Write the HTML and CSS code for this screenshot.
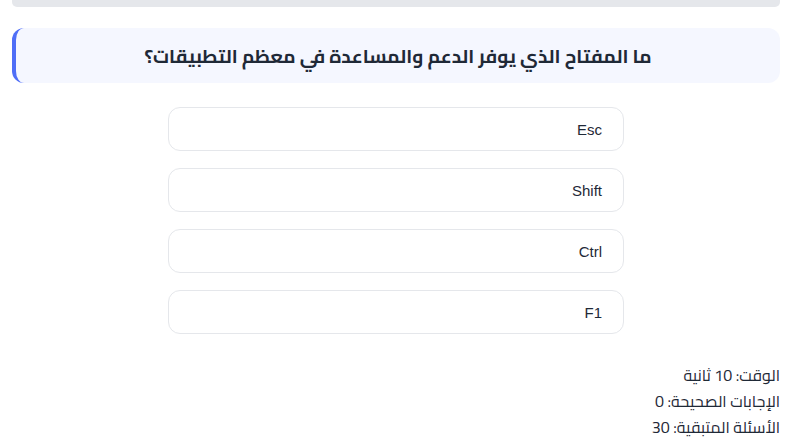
FILE: index.html
```html
<!DOCTYPE html>
<html lang="ar" dir="rtl">
<head>
<meta charset="utf-8">
<link rel="stylesheet" href="styles.css">
</head>
<body>
<div class="page">
  <div class="progress"><div class="progress-fill" style="width:0%"></div></div>
  <div class="question">ما المفتاح الذي يوفر الدعم والمساعدة في معظم التطبيقات؟</div>
  <div class="options">
    <button class="option">Esc</button>
    <button class="option">Shift</button>
    <button class="option">Ctrl</button>
    <button class="option">F1</button>
  </div>
  <div class="stats">
    <div class="stat">الوقت: 10 ثانية</div>
    <div class="stat">الإجابات الصحيحة: 0</div>
    <div class="stat">الأسئلة المتبقية: 30</div>
  </div>
</div>
</body>
</html>
```
FILE: styles.css
```css
html, body {
  margin: 0;
  padding: 0;
  background: #ffffff;
}
body {
  font-family: "Cairo", "Noto Sans", sans-serif;
  color: #1f2937;
}
.page {
  padding: 0 20px 0 12px;
  display: flex;
  flex-direction: column;
}
.progress {
  height: 7px;
  background: #e5e7eb;
  border-radius: 0 0 5px 5px;
}
.progress-fill {
  height: 100%;
  background: #4f6ef7;
}
.question {
  margin-top: 21px;
  height: 55px;
  display: flex;
  align-items: center;
  justify-content: center;
  background: #f5f7ff;
  border-left: 4px solid #4f6ef7;
  border-radius: 12px;
  font-size: 19px;
  font-weight: 700;
  color: #1f2937;
}
.options {
  margin-top: 24px;
  display: flex;
  flex-direction: column;
  align-items: center;
  gap: 17px;
}
.option {
  width: 456px;
  height: 44px;
  background: #ffffff;
  border: 1.5px solid #e5e7eb;
  border-radius: 12px;
  padding: 0 21px;
  text-align: right;
  font-family: "Liberation Sans", Arial, sans-serif;
  font-size: 15px;
  color: #1f2937;
}
.stats {
  margin-top: 28px;
  display: flex;
  flex-direction: column;
  font-size: 16px;
  line-height: 26px;
  color: #1f2937;
}
```
